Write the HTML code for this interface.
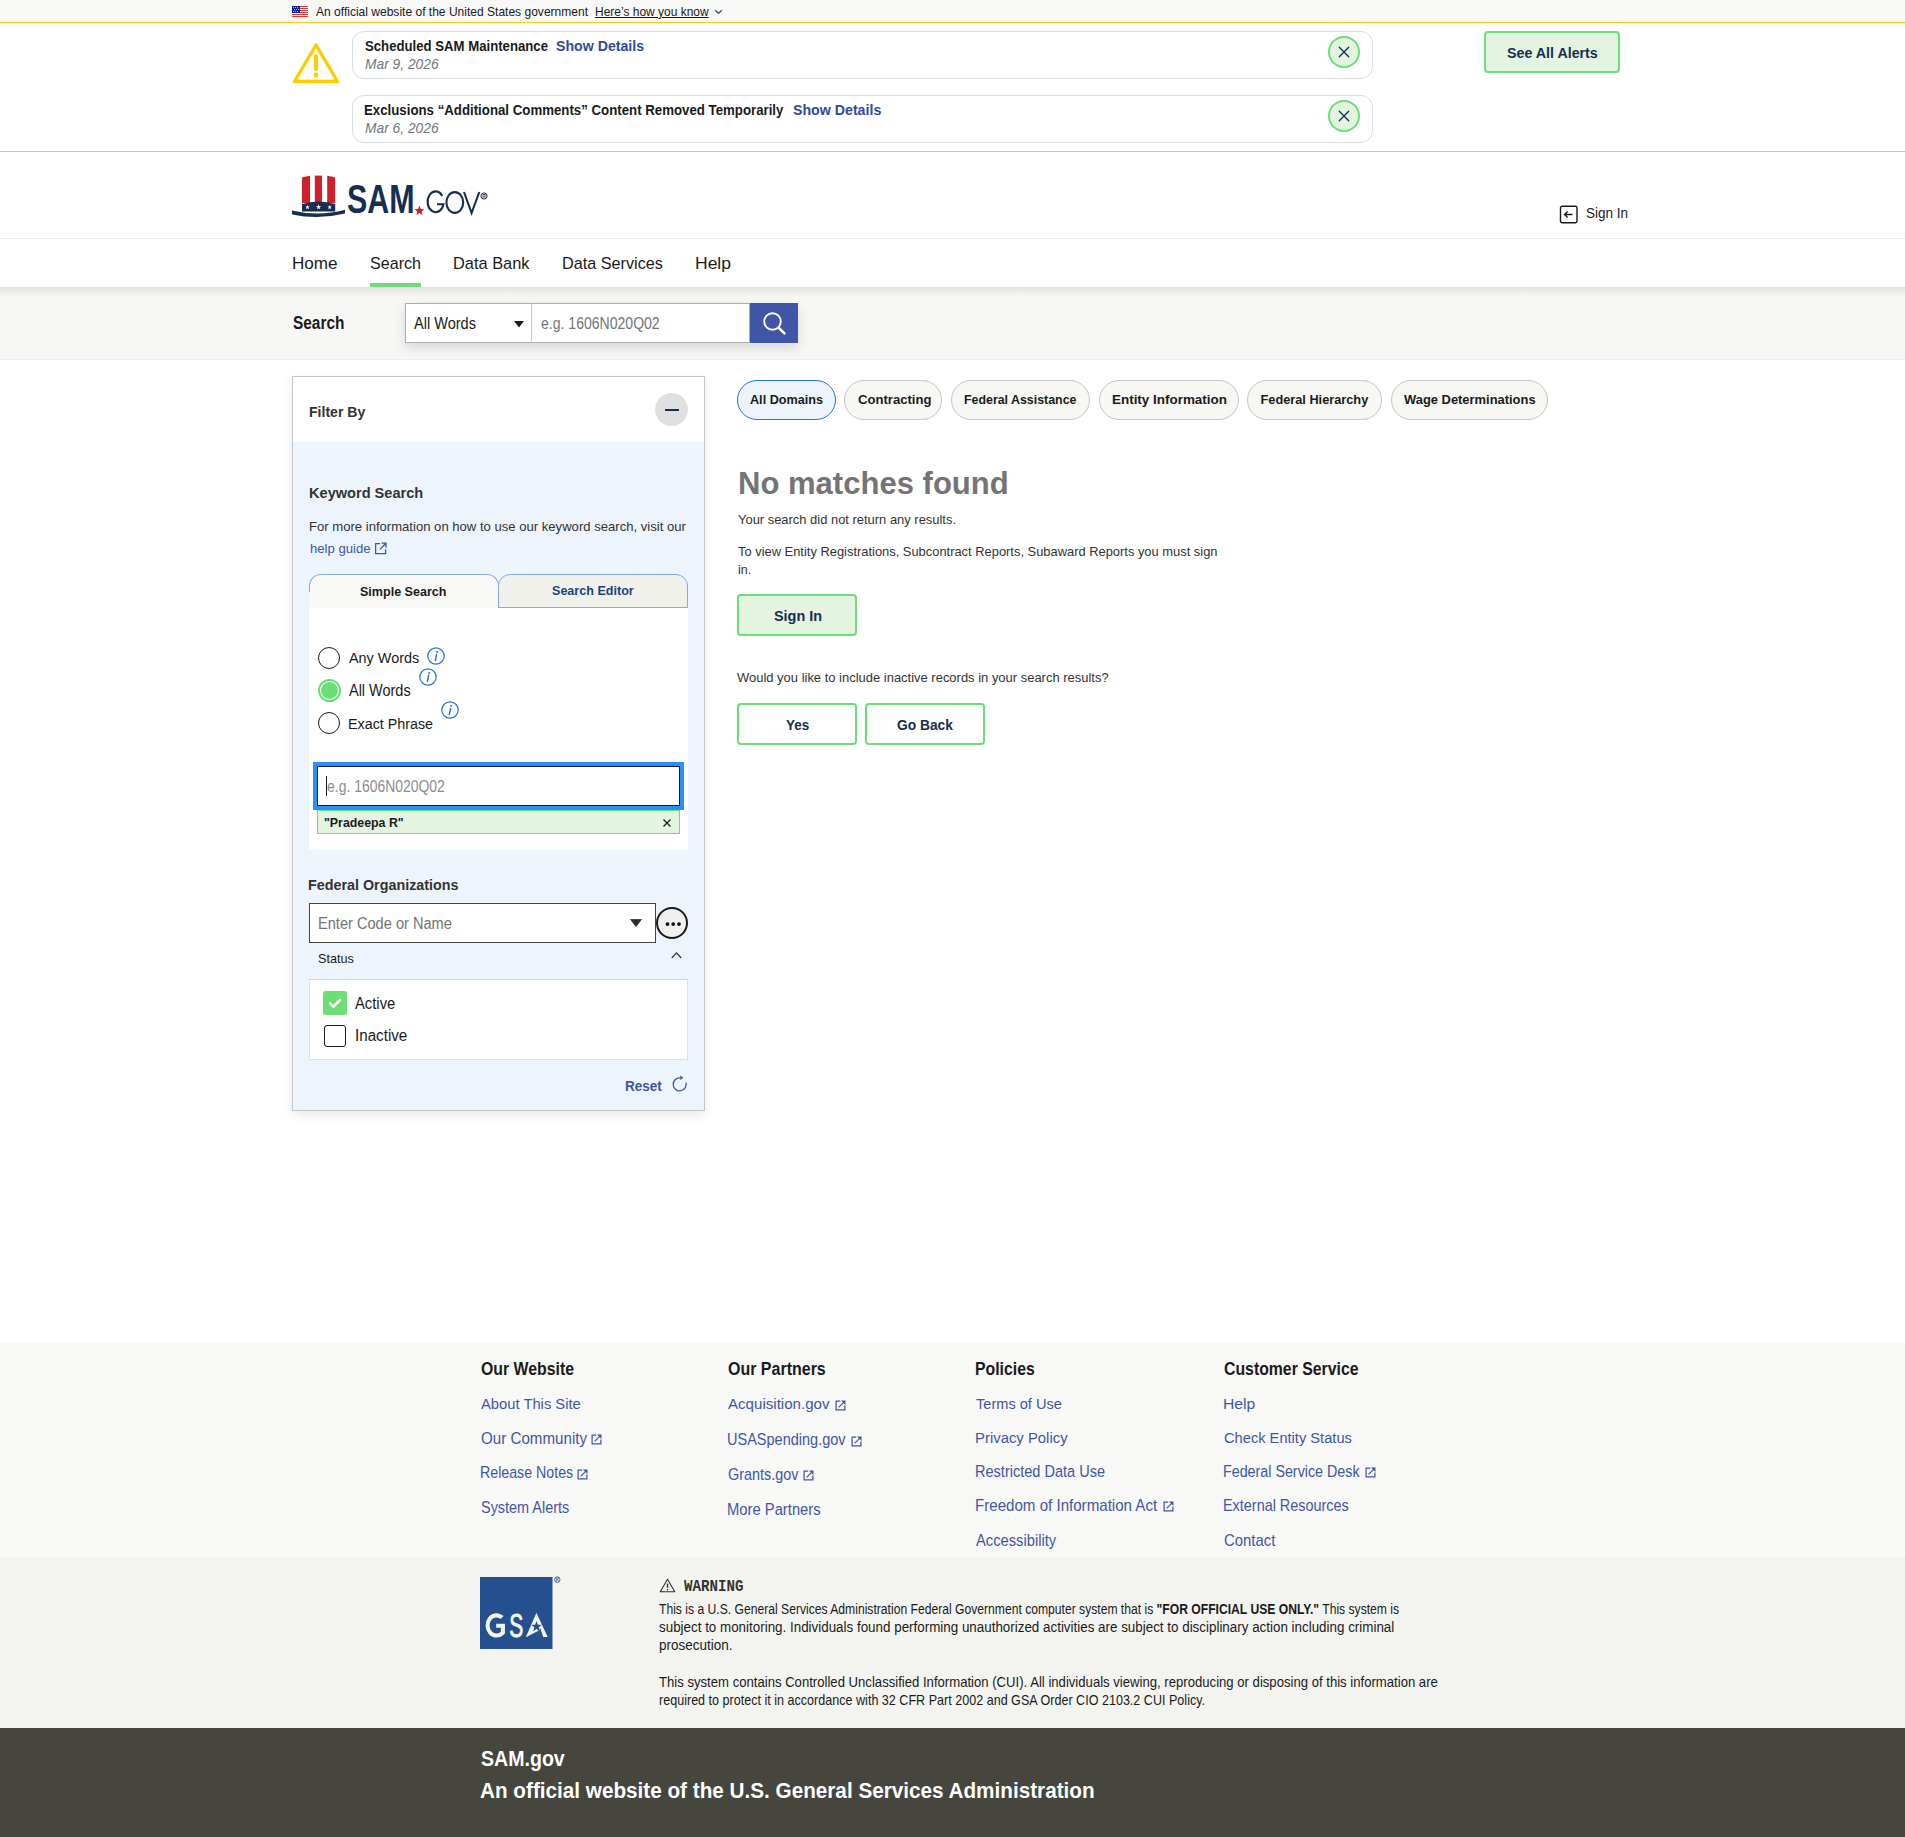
<!DOCTYPE html>
<html><head><meta charset="utf-8">
<style>
*{box-sizing:border-box;margin:0;padding:0}
html,body{width:1905px;height:1837px;overflow:hidden;background:#fff;font-family:"Liberation Sans",sans-serif;color:#1b1b1b}
.a{position:absolute;white-space:nowrap;transform-origin:0 0}
.b{position:absolute}

</style></head><body>
<div class="b" style="left:0;top:0;width:1905px;height:22px;background:#f8f8f6"></div>
<div class="b" style="left:0;top:22px;width:1905px;height:1px;background:#fbd106"></div>
<div class="b" style="left:0;top:151px;width:1905px;height:1px;background:#fbd106"></div>
<svg class="b" style="left:292px;top:6px" width="16" height="11" viewBox="0 0 16 11">
<rect width="16" height="11" fill="#fff"/>
<g fill="#d83933"><rect y="0" width="16" height="1"/><rect y="2" width="16" height="1"/><rect y="4" width="16" height="1"/><rect y="6" width="16" height="1"/><rect y="8" width="16" height="1"/><rect y="10" width="16" height="1"/></g>
<rect width="8" height="7" fill="#0b1ea8"/>
<g fill="#fff"><circle cx="1.6" cy="1.4" r=".5"/><circle cx="3.6" cy="1.4" r=".5"/><circle cx="5.6" cy="1.4" r=".5"/><circle cx="2.6" cy="3.4" r=".5"/><circle cx="4.6" cy="3.4" r=".5"/><circle cx="6.6" cy="3.4" r=".5"/><circle cx="1.6" cy="5.4" r=".5"/><circle cx="3.6" cy="5.4" r=".5"/><circle cx="5.6" cy="5.4" r=".5"/></g>
</svg>
<div class="a" style="left:316.00px;top:4.79px;font-size:13.19px;line-height:13.19px;font-weight:400;font-style:normal;color:#1b1b1b;font-family:'Liberation Sans',sans-serif;transform:scaleX(0.9125);">An official website of the United States government</div>
<div class="a" style="left:595.09px;top:4.79px;font-size:13.19px;line-height:13.19px;font-weight:400;font-style:normal;color:#1b1b1b;font-family:'Liberation Sans',sans-serif;transform:scaleX(0.9081);text-decoration:underline;text-underline-offset:1px">Here’s how you know</div>
<svg class="b" style="left:714px;top:8px" width="9" height="7" viewBox="0 0 9 7"><path d="M1.2 2.2 L4.5 5.3 L7.8 2.2" fill="none" stroke="#3f57a6" stroke-width="1.4"/></svg>
<svg class="b" style="left:292px;top:42px" width="48" height="42" viewBox="0 0 48 42">
<path d="M24 3 L45.5 39.5 L2.5 39.5 Z" fill="none" stroke="#fccd00" stroke-width="3.4" stroke-linejoin="round"/>
<path d="M24 14 L24 27" stroke="#fccd00" stroke-width="4.2" stroke-linecap="round"/>
<circle cx="24" cy="33" r="2.4" fill="#fccd00"/>
</svg>
<div class="b" style="left:352px;top:31px;width:1021px;height:48px;border:1px solid #dcdddf;border-radius:12px;background:#fff"></div>
<div class="b" style="left:1328px;top:36px;width:32px;height:32px;border-radius:50%;border:2px solid #6ddd76;background:#e3f4e1"></div>
<svg class="b" style="left:1338px;top:46px" width="12" height="12" viewBox="0 0 12 12"><path d="M1.3 1.3 L10.7 10.7 M10.7 1.3 L1.3 10.7" stroke="#162e51" stroke-width="1.35" stroke-linecap="round"/></svg>
<div class="b" style="left:352px;top:95px;width:1021px;height:48px;border:1px solid #dcdddf;border-radius:12px;background:#fff"></div>
<div class="b" style="left:1328px;top:100px;width:32px;height:32px;border-radius:50%;border:2px solid #6ddd76;background:#e3f4e1"></div>
<svg class="b" style="left:1338px;top:110px" width="12" height="12" viewBox="0 0 12 12"><path d="M1.3 1.3 L10.7 10.7 M10.7 1.3 L1.3 10.7" stroke="#162e51" stroke-width="1.35" stroke-linecap="round"/></svg>
<div class="a" style="left:365.00px;top:38.61px;font-size:14.93px;line-height:14.93px;font-weight:700;font-style:normal;color:#1b1b1b;font-family:'Liberation Sans',sans-serif;transform:scaleX(0.8826);">Scheduled SAM Maintenance</div>
<div class="a" style="left:556.30px;top:38.61px;font-size:14.93px;line-height:14.93px;font-weight:700;font-style:normal;color:#2f4a9e;font-family:'Liberation Sans',sans-serif;transform:scaleX(0.9483);">Show Details</div>
<div class="a" style="left:365.00px;top:56.17px;font-size:15.22px;line-height:15.22px;font-weight:400;font-style:italic;color:#71767a;font-family:'Liberation Sans',sans-serif;transform:scaleX(0.9060);">Mar 9, 2026</div>
<div class="a" style="left:364.11px;top:102.61px;font-size:14.93px;line-height:14.93px;font-weight:700;font-style:normal;color:#1b1b1b;font-family:'Liberation Sans',sans-serif;transform:scaleX(0.8880);">Exclusions “Additional Comments” Content Removed Temporarily</div>
<div class="a" style="left:792.50px;top:102.61px;font-size:14.93px;line-height:14.93px;font-weight:700;font-style:normal;color:#2f4a9e;font-family:'Liberation Sans',sans-serif;transform:scaleX(0.9505);">Show Details</div>
<div class="a" style="left:365.00px;top:120.17px;font-size:15.22px;line-height:15.22px;font-weight:400;font-style:italic;color:#71767a;font-family:'Liberation Sans',sans-serif;transform:scaleX(0.9060);">Mar 6, 2026</div>
<div class="b" style="left:1484px;top:31px;width:136px;height:42px;border:2px solid #6ddd76;border-radius:4px;background:#e3f4e1"></div>
<div class="a" style="left:1506.80px;top:45.37px;font-size:15.22px;line-height:15.22px;font-weight:700;font-style:normal;color:#162e51;font-family:'Liberation Sans',sans-serif;transform:scaleX(0.9358);">See All Alerts</div>
<svg class="b" style="left:290px;top:174px" width="60" height="44" viewBox="290 174 60 44">
<path d="M302 177.5 Q306 176.3 310 175.8 L310 203 L302 203 Z" fill="#d0202e"/>
<path d="M314.8 175.6 L322 175.6 L322 203 L314.8 203 Z" fill="#d0202e"/>
<path d="M327.2 175.8 Q331.5 176.3 335.2 177.5 L335.2 203 L327.2 203 Z" fill="#d0202e"/>
<path d="M302 204 Q318.6 199 335.2 204 L335.2 211.5 L302 211.5 Z" fill="#162e51"/>
<polygon points="307.50,204.80 308.09,206.38 309.78,206.46 308.46,207.51 308.91,209.14 307.50,208.21 306.09,209.14 306.54,207.51 305.22,206.46 306.91,206.38" fill="#fff"/><polygon points="318.60,204.30 319.27,206.08 321.17,206.17 319.68,207.35 320.19,209.18 318.60,208.13 317.01,209.18 317.52,207.35 316.03,206.17 317.93,206.08" fill="#fff"/><polygon points="329.70,204.80 330.29,206.38 331.98,206.46 330.66,207.51 331.11,209.14 329.70,208.21 328.29,209.14 328.74,207.51 327.42,206.46 329.11,206.38" fill="#fff"/>
<path d="M292 210.5 Q318.5 217 345 209.8 L345 213.5 Q318.5 220 292 214.5 Z" fill="#162e51"/>
</svg>
<div class="a" style="left:347.24px;top:179.30px;font-size:40.00px;line-height:40.00px;font-weight:700;font-style:normal;color:#162e51;font-family:'Liberation Sans',sans-serif;transform:scaleX(0.7596);">SAM</div>
<svg class="b" style="left:414px;top:205px" width="11" height="11" viewBox="0 0 24 24"><path d="M12 1 L14.9 8.6 L23 9 L16.7 14.2 L18.8 22 L12 17.6 L5.2 22 L7.3 14.2 L1 9 L9.1 8.6 Z" fill="#d0202e"/></svg>
<svg class="b" style="left:420px;top:185px" width="70" height="35" viewBox="420 185 70 35"><g fill="none" stroke="#162e51" stroke-width="2.1"><path d="M442.3 196 A8 10.4 0 1 0 443.4 204.2 L437 204.2"/><ellipse cx="454.8" cy="202.5" rx="8.4" ry="10.4"/><path d="M464 192 L471.6 213 L479.3 192"/></g></svg>
<svg class="b" style="left:480px;top:192px" width="8" height="8" viewBox="0 0 8 8"><circle cx="4" cy="4" r="3.1" fill="none" stroke="#162e51" stroke-width="1"/><text x="4" y="5.8" font-size="5" text-anchor="middle" fill="#162e51" font-family="Liberation Sans" font-weight="bold">R</text></svg>
<svg class="b" style="left:1559px;top:205px" width="20" height="19" viewBox="0 0 20 19"><rect x="1.5" y="1.2" width="16.5" height="16.5" rx="1.6" fill="none" stroke="#1b1b1b" stroke-width="1.4"/><path d="M13.5 9.5 L5.5 9.5 M8.6 6.4 L5.5 9.5 L8.6 12.6" fill="none" stroke="#1b1b1b" stroke-width="1.4"/></svg>
<div class="a" style="left:1586.00px;top:205.14px;font-size:15.36px;line-height:15.36px;font-weight:400;font-style:normal;color:#1b1b1b;font-family:'Liberation Sans',sans-serif;transform:scaleX(0.8799);">Sign In</div>
<div class="b" style="left:0;top:238px;width:1905px;height:1px;background:#efefea"></div>
<div class="a" style="left:292.02px;top:254.52px;font-size:17.39px;line-height:17.39px;font-weight:400;font-style:normal;color:#1b1b1b;font-family:'Liberation Sans',sans-serif;transform:scaleX(0.9847);">Home</div>
<div class="a" style="left:370.00px;top:254.52px;font-size:17.39px;line-height:17.39px;font-weight:400;font-style:normal;color:#1b1b1b;font-family:'Liberation Sans',sans-serif;transform:scaleX(0.9267);">Search</div>
<div class="a" style="left:453.06px;top:254.52px;font-size:17.39px;line-height:17.39px;font-weight:400;font-style:normal;color:#1b1b1b;font-family:'Liberation Sans',sans-serif;transform:scaleX(0.9423);">Data Bank</div>
<div class="a" style="left:561.87px;top:254.52px;font-size:17.39px;line-height:17.39px;font-weight:400;font-style:normal;color:#1b1b1b;font-family:'Liberation Sans',sans-serif;transform:scaleX(0.9324);">Data Services</div>
<div class="a" style="left:694.99px;top:254.52px;font-size:17.39px;line-height:17.39px;font-weight:400;font-style:normal;color:#1b1b1b;font-family:'Liberation Sans',sans-serif;transform:scaleX(1.0067);">Help</div>
<div class="b" style="left:370px;top:283px;width:51px;height:4px;background:#6ddd76"></div>
<div class="b" style="left:0;top:287px;width:1905px;height:72px;background:#f7f7f5"></div>
<div class="b" style="left:0;top:287px;width:1905px;height:11px;background:linear-gradient(rgba(0,0,0,.095),rgba(0,0,0,.02) 60%,rgba(0,0,0,0))"></div>
<div class="b" style="left:0;top:359px;width:1905px;height:1px;background:#eeeeea"></div>
<div class="a" style="left:293.00px;top:313.58px;font-size:18.26px;line-height:18.26px;font-weight:700;font-style:normal;color:#1b1b1b;font-family:'Liberation Sans',sans-serif;transform:scaleX(0.8448);">Search</div>
<div class="b" style="left:405px;top:303px;width:393px;height:40px;box-shadow:0 5px 12px rgba(0,0,0,.13)"></div>
<div class="b" style="left:405px;top:303px;width:127px;height:40px;background:#fff;border:1px solid #a9aeb1"></div>
<div class="b" style="left:531px;top:303px;width:219px;height:40px;background:#fff;border:1px solid #a9aeb1;border-left:1px solid #c9c9c9"></div>
<div class="a" style="left:414.00px;top:315.55px;font-size:15.94px;line-height:15.94px;font-weight:400;font-style:normal;color:#1b1b1b;font-family:'Liberation Sans',sans-serif;transform:scaleX(0.9127);">All Words</div>
<svg class="b" style="left:514px;top:321px" width="10" height="7" viewBox="0 0 10 7"><path d="M0 0 L10 0 L5 6.5 Z" fill="#1b1b1b"/></svg>
<div class="a" style="left:540.70px;top:315.55px;font-size:15.94px;line-height:15.94px;font-weight:400;font-style:normal;color:#71767a;font-family:'Liberation Sans',sans-serif;transform:scaleX(0.8811);">e.g. 1606N020Q02</div>
<div class="b" style="left:750px;top:303px;width:48px;height:40px;background:#3f55a7"></div>
<svg class="b" style="left:760px;top:310px" width="28" height="28" viewBox="760 310 28 28"><circle cx="772.5" cy="321.5" r="8.3" fill="none" stroke="#fff" stroke-width="1.9"/><path d="M778.6 327.8 L784.4 333.4" stroke="#fff" stroke-width="2.6" stroke-linecap="round"/></svg>
<div class="b" style="left:292px;top:376px;width:413px;height:735px;border:1px solid #c6c6c6;background:#edf4fb;box-shadow:0 4px 10px rgba(0,0,0,.09)"></div>
<div class="b" style="left:293px;top:377px;width:411px;height:65px;background:#fff"></div>
<div class="a" style="left:308.58px;top:403.67px;font-size:15.22px;line-height:15.22px;font-weight:700;font-style:normal;color:#333;font-family:'Liberation Sans',sans-serif;transform:scaleX(0.9243);">Filter By</div>
<div class="b" style="left:655px;top:393px;width:33px;height:33px;border-radius:50%;background:#e0e0e0"></div>
<div class="b" style="left:665px;top:409px;width:14px;height:1.5px;background:#112e51"></div>
<div class="a" style="left:308.72px;top:485.71px;font-size:14.93px;line-height:14.93px;font-weight:700;font-style:normal;color:#333;font-family:'Liberation Sans',sans-serif;transform:scaleX(0.9766);">Keyword Search</div>
<div class="a" style="left:308.81px;top:520.09px;font-size:13.19px;line-height:13.19px;font-weight:400;font-style:normal;color:#333;font-family:'Liberation Sans',sans-serif;transform:scaleX(0.9925);">For more information on how to use our keyword search, visit our</div>
<div class="a" style="left:309.80px;top:541.74px;font-size:13.60px;line-height:13.60px;font-weight:400;font-style:normal;color:#3f57a6;font-family:'Liberation Sans',sans-serif;transform:scaleX(0.9650);">help guide</div>
<svg class="b" style="left:374px;top:542px" width="14" height="13" viewBox="0 0 14 13"><path d="M6 1.6 L1.6 1.6 L1.6 11.6 L11.6 11.6 L11.6 7.2" fill="none" stroke="#3f57a6" stroke-width="1.3"/><path d="M7.5 1.2 L12 1.2 L12 5.7 M12 1.2 L6 7.2" fill="none" stroke="#3f57a6" stroke-width="1.3"/></svg>
<div class="b" style="left:309px;top:608px;width:379px;height:242px;background:#fff"></div>
<div class="b" style="left:309px;top:574px;width:190px;height:34px;background:#f8f8f6;border:1px solid #80a9f0;border-bottom:none;border-radius:12px 12px 0 0"></div>
<div class="b" style="left:309px;top:592px;width:1.5px;height:16px;background:#f8f8f6"></div>
<div class="b" style="left:498px;top:574px;width:190px;height:34px;background:#f1f1ec;border:1px solid #80a9f0;border-radius:12px 12px 0 0"></div>
<div class="a" style="left:360.00px;top:585.84px;font-size:12.90px;line-height:12.90px;font-weight:700;font-style:normal;color:#1b1b1b;font-family:'Liberation Sans',sans-serif;transform:scaleX(0.9733);">Simple Search</div>
<div class="a" style="left:552.30px;top:585.24px;font-size:12.90px;line-height:12.90px;font-weight:700;font-style:normal;color:#1a4480;font-family:'Liberation Sans',sans-serif;transform:scaleX(0.9749);">Search Editor</div>
<div class="b" style="left:318px;top:647px;width:22px;height:22px;border-radius:50%;border:1.6px solid #1b1b1b;background:#fff"></div>
<div class="b" style="left:317.5px;top:679px;width:23px;height:23px;border-radius:50%;border:2.4px solid #6ddd76;background:#fff"></div>
<div class="b" style="left:320.5px;top:682px;width:17px;height:17px;border-radius:50%;background:#6ddd76"></div>
<div class="b" style="left:318px;top:712px;width:22px;height:22px;border-radius:50%;border:1.6px solid #1b1b1b;background:#fff"></div>
<div class="a" style="left:348.90px;top:650.12px;font-size:15.51px;line-height:15.51px;font-weight:400;font-style:normal;color:#1b1b1b;font-family:'Liberation Sans',sans-serif;transform:scaleX(0.9292);">Any Words</div>
<div class="a" style="left:348.90px;top:682.80px;font-size:15.65px;line-height:15.65px;font-weight:400;font-style:normal;color:#1b1b1b;font-family:'Liberation Sans',sans-serif;transform:scaleX(0.9250);">All Words</div>
<div class="a" style="left:348.37px;top:716.24px;font-size:15.36px;line-height:15.36px;font-weight:400;font-style:normal;color:#1b1b1b;font-family:'Liberation Sans',sans-serif;transform:scaleX(0.9309);">Exact Phrase</div>
<svg class="b" style="left:427px;top:647px" width="18" height="18" viewBox="0 0 18 18"><circle cx="9" cy="9" r="8.2" fill="none" stroke="#2672de" stroke-width="1.2"/><path d="M9.6 7.6 L8.3 13.6" stroke="#2672de" stroke-width="1.5" stroke-linecap="round"/><circle cx="10.1" cy="4.9" r="1" fill="#2672de"/></svg>
<svg class="b" style="left:419px;top:668px" width="18" height="18" viewBox="0 0 18 18"><circle cx="9" cy="9" r="8.2" fill="none" stroke="#2672de" stroke-width="1.2"/><path d="M9.6 7.6 L8.3 13.6" stroke="#2672de" stroke-width="1.5" stroke-linecap="round"/><circle cx="10.1" cy="4.9" r="1" fill="#2672de"/></svg>
<svg class="b" style="left:441px;top:701px" width="18" height="18" viewBox="0 0 18 18"><circle cx="9" cy="9" r="8.2" fill="none" stroke="#2672de" stroke-width="1.2"/><path d="M9.6 7.6 L8.3 13.6" stroke="#2672de" stroke-width="1.5" stroke-linecap="round"/><circle cx="10.1" cy="4.9" r="1" fill="#2672de"/></svg>
<div class="b" style="left:313px;top:762px;width:371px;height:48px;background:#2491ff"></div>
<div class="b" style="left:317px;top:766px;width:363px;height:40px;background:#fff;border:1px solid #1b1b1b"></div>
<div class="b" style="left:326px;top:776px;width:1.2px;height:20px;background:#1b1b1b"></div>
<div class="a" style="left:327.00px;top:778.65px;font-size:15.94px;line-height:15.94px;font-weight:400;font-style:normal;color:#8d8d8d;font-family:'Liberation Sans',sans-serif;transform:scaleX(0.8752);">e.g. 1606N020Q02</div>
<div class="b" style="left:317px;top:810px;width:363px;height:24px;background:#e3f4e1;border:1px solid #6ddd76"></div>
<div class="a" style="left:323.80px;top:816.11px;font-size:13.04px;line-height:13.04px;font-weight:700;font-style:normal;color:#1b1b1b;font-family:'Liberation Sans',sans-serif;transform:scaleX(0.9478);">&quot;Pradeepa R&quot;</div>
<svg class="b" style="left:662px;top:818px" width="10" height="10" viewBox="0 0 10 10"><path d="M1.5 1.5 L8.5 8.5 M8.5 1.5 L1.5 8.5" stroke="#1b1b1b" stroke-width="1.3"/></svg>
<div class="a" style="left:308.46px;top:877.47px;font-size:15.22px;line-height:15.22px;font-weight:700;font-style:normal;color:#333;font-family:'Liberation Sans',sans-serif;transform:scaleX(0.9418);">Federal Organizations</div>
<div class="b" style="left:309px;top:903px;width:347px;height:40px;background:#fff;border:1px solid #46463f"></div>
<div class="a" style="left:317.88px;top:915.77px;font-size:15.80px;line-height:15.80px;font-weight:400;font-style:normal;color:#757575;font-family:'Liberation Sans',sans-serif;transform:scaleX(0.9239);">Enter Code or Name</div>
<svg class="b" style="left:630px;top:919px" width="12" height="8" viewBox="0 0 12 8"><path d="M0.6 0.4 L11.4 0.4 L6 7.6 Z" fill="#2b2b28" stroke="#2b2b28" stroke-width=".8" stroke-linejoin="round"/></svg>
<div class="b" style="left:656px;top:907px;width:32px;height:32px;border-radius:50%;border:2px solid #1b1b1b;background:#f0f0f0"></div>
<svg class="b" style="left:664px;top:921px" width="18" height="6" viewBox="0 0 18 6"><circle cx="3.5" cy="3.1" r="1.9" fill="#111"/><circle cx="9.2" cy="3.1" r="1.9" fill="#111"/><circle cx="15" cy="3.1" r="1.9" fill="#111"/></svg>
<div class="a" style="left:317.70px;top:953.26px;font-size:12.75px;line-height:12.75px;font-weight:400;font-style:normal;color:#1b1b1b;font-family:'Liberation Sans',sans-serif;transform:scaleX(0.9924);">Status</div>
<svg class="b" style="left:670px;top:950px" width="13" height="10" viewBox="0 0 13 10"><path d="M1.8 8 L6.5 2.8 L11.2 8" fill="none" stroke="#333" stroke-width="1.2"/></svg>
<div class="b" style="left:309px;top:979px;width:379px;height:81px;background:#fff;border:1px solid #dfe1e2;border-top-color:#d6d7d9"></div>
<div class="b" style="left:323px;top:991px;width:24px;height:24px;border-radius:3px;background:#6ddd76"></div>
<svg class="b" style="left:323px;top:991px" width="24" height="24" viewBox="0 0 24 24"><path d="M7 12.3 L10.5 15.6 L17 9" fill="none" stroke="#fff" stroke-width="2.6" stroke-linecap="round" stroke-linejoin="round"/></svg>
<div class="a" style="left:354.80px;top:995.77px;font-size:15.80px;line-height:15.80px;font-weight:400;font-style:normal;color:#1b1b1b;font-family:'Liberation Sans',sans-serif;transform:scaleX(0.9352);">Active</div>
<div class="b" style="left:324px;top:1025px;width:22px;height:22px;border-radius:3px;border:1.5px solid #1b1b1b;background:#fff"></div>
<div class="a" style="left:354.94px;top:1027.87px;font-size:15.80px;line-height:15.80px;font-weight:400;font-style:normal;color:#1b1b1b;font-family:'Liberation Sans',sans-serif;transform:scaleX(0.9606);">Inactive</div>
<div class="a" style="left:625.40px;top:1079.26px;font-size:14.64px;line-height:14.64px;font-weight:700;font-style:normal;color:#3f57a6;font-family:'Liberation Sans',sans-serif;transform:scaleX(0.9259);">Reset</div>
<svg class="b" style="left:671px;top:1075px" width="17" height="17" viewBox="0 0 17 17"><path d="M15 7.6 A6.5 6.5 0 1 1 8.9 2.8" fill="none" stroke="#3f57a6" stroke-width="1.3"/><path d="M9.2 0.6 L12.4 2.8 L9.2 5 Z" fill="#3f57a6"/></svg>
<div class="b" style="left:737px;top:380px;width:99.0px;height:40px;border-radius:20px;border:1.5px solid #2672de;background:#edf4fb"></div>
<div class="a" style="left:750.00px;top:394.26px;font-size:12.75px;line-height:12.75px;font-weight:700;font-style:normal;color:#1b1b1b;font-family:'Liberation Sans',sans-serif;transform:scaleX(0.9906);">All Domains</div>
<div class="b" style="left:844px;top:380px;width:98.3px;height:40px;border-radius:20px;border:1px solid #c6c6c6;background:#f7f7f4"></div>
<div class="a" style="left:857.50px;top:394.26px;font-size:12.75px;line-height:12.75px;font-weight:700;font-style:normal;color:#1b1b1b;font-family:'Liberation Sans',sans-serif;transform:scaleX(1.0276);">Contracting</div>
<div class="b" style="left:951.2px;top:380px;width:139.2px;height:40px;border-radius:20px;border:1px solid #c6c6c6;background:#f7f7f4"></div>
<div class="a" style="left:964.40px;top:394.26px;font-size:12.75px;line-height:12.75px;font-weight:700;font-style:normal;color:#1b1b1b;font-family:'Liberation Sans',sans-serif;transform:scaleX(0.9713);">Federal Assistance</div>
<div class="b" style="left:1099.3px;top:380px;width:139.3px;height:40px;border-radius:20px;border:1px solid #c6c6c6;background:#f7f7f4"></div>
<div class="a" style="left:1111.90px;top:394.26px;font-size:12.75px;line-height:12.75px;font-weight:700;font-style:normal;color:#1b1b1b;font-family:'Liberation Sans',sans-serif;transform:scaleX(1.0536);">Entity Information</div>
<div class="b" style="left:1246.9px;top:380px;width:135.3px;height:40px;border-radius:20px;border:1px solid #c6c6c6;background:#f7f7f4"></div>
<div class="a" style="left:1260.50px;top:394.26px;font-size:12.75px;line-height:12.75px;font-weight:700;font-style:normal;color:#1b1b1b;font-family:'Liberation Sans',sans-serif;">Federal Hierarchy</div>
<div class="b" style="left:1391px;top:380px;width:157.4px;height:40px;border-radius:20px;border:1px solid #c6c6c6;background:#f7f7f4"></div>
<div class="a" style="left:1403.60px;top:394.26px;font-size:12.75px;line-height:12.75px;font-weight:700;font-style:normal;color:#1b1b1b;font-family:'Liberation Sans',sans-serif;transform:scaleX(1.0131);">Wage Determinations</div>
<div class="a" style="left:737.73px;top:468.34px;font-size:31.59px;line-height:31.59px;font-weight:700;font-style:normal;color:#747474;font-family:'Liberation Sans',sans-serif;transform:scaleX(0.9829);">No matches found</div>
<div class="a" style="left:737.50px;top:513.11px;font-size:13.04px;line-height:13.04px;font-weight:400;font-style:normal;color:#333;font-family:'Liberation Sans',sans-serif;transform:scaleX(0.9922);">Your search did not return any results.</div>
<div class="a" style="left:737.50px;top:545.07px;font-size:13.33px;line-height:13.33px;font-weight:400;font-style:normal;color:#333;font-family:'Liberation Sans',sans-serif;transform:scaleX(0.9675);">To view Entity Registrations, Subcontract Reports, Subaward Reports you must sign</div>
<div class="a" style="left:737.80px;top:563.18px;font-size:13.20px;line-height:13.20px;font-weight:400;font-style:normal;color:#333;font-family:'Liberation Sans',sans-serif;transform:scaleX(0.9424);">in.</div>
<div class="b" style="left:737px;top:594px;width:120px;height:42px;border:2px solid #6ddd76;border-radius:4px;background:#e3f4e1"></div>
<div class="a" style="left:773.80px;top:608.98px;font-size:14.49px;line-height:14.49px;font-weight:700;font-style:normal;color:#162e51;font-family:'Liberation Sans',sans-serif;transform:scaleX(0.9952);">Sign In</div>
<div class="a" style="left:737.30px;top:671.21px;font-size:13.04px;line-height:13.04px;font-weight:400;font-style:normal;color:#333;font-family:'Liberation Sans',sans-serif;transform:scaleX(0.9950);">Would you like to include inactive records in your search results?</div>
<div class="b" style="left:737px;top:703px;width:120px;height:42px;border:2px solid #6ddd76;border-radius:4px;background:#fff"></div>
<div class="a" style="left:785.80px;top:718.00px;font-size:14.35px;line-height:14.35px;font-weight:700;font-style:normal;color:#162e51;font-family:'Liberation Sans',sans-serif;transform:scaleX(0.9380);">Yes</div>
<div class="b" style="left:865px;top:703px;width:120px;height:42px;border:2px solid #6ddd76;border-radius:4px;background:#fff"></div>
<div class="a" style="left:897.40px;top:718.00px;font-size:14.35px;line-height:14.35px;font-weight:700;font-style:normal;color:#162e51;font-family:'Liberation Sans',sans-serif;transform:scaleX(0.9611);">Go Back</div>
<div class="b" style="left:0;top:1343px;width:1905px;height:214px;background:#f8f8f6"></div>
<div class="b" style="left:0;top:1557px;width:1905px;height:171px;background:#f3f4ef"></div>
<div class="b" style="left:0;top:1728px;width:1905px;height:109px;background:#46463f"></div>
<div class="a" style="left:480.50px;top:1360.79px;font-size:17.54px;line-height:17.54px;font-weight:700;font-style:normal;color:#1b1b1b;font-family:'Liberation Sans',sans-serif;transform:scaleX(0.9030);">Our Website</div>
<div class="a" style="left:728.20px;top:1360.79px;font-size:17.54px;line-height:17.54px;font-weight:700;font-style:normal;color:#1b1b1b;font-family:'Liberation Sans',sans-serif;transform:scaleX(0.9121);">Our Partners</div>
<div class="a" style="left:975.30px;top:1360.79px;font-size:17.54px;line-height:17.54px;font-weight:700;font-style:normal;color:#1b1b1b;font-family:'Liberation Sans',sans-serif;transform:scaleX(0.9028);">Policies</div>
<div class="a" style="left:1224.30px;top:1360.79px;font-size:17.54px;line-height:17.54px;font-weight:700;font-style:normal;color:#1b1b1b;font-family:'Liberation Sans',sans-serif;transform:scaleX(0.9021);">Customer Service</div>
<div class="a" style="left:480.50px;top:1396.07px;font-size:15.22px;line-height:15.22px;font-weight:400;font-style:normal;color:#3f57a6;font-family:'Liberation Sans',sans-serif;transform:scaleX(0.9694);">About This Site</div>
<div class="a" style="left:480.50px;top:1430.03px;font-size:16.09px;line-height:16.09px;font-weight:400;font-style:normal;color:#3f57a6;font-family:'Liberation Sans',sans-serif;transform:scaleX(0.9420);">Our Community</div>
<svg class="b" style="left:590.6px;top:1434.2px" width="11" height="11" viewBox="0 0 11 11"><path d="M5.2 1.1 L1.1 1.1 L1.1 9.9 L9.9 9.9 L9.9 5.6" fill="none" stroke="#3f57a6" stroke-width="1.25"/><path d="M3.6 7.4 L9.2 1.8" stroke="#3f57a6" stroke-width="1.2"/><path d="M6 0.5 L10.5 0.5 L10.5 5 Z" fill="#3f57a6"/></svg>
<div class="a" style="left:479.59px;top:1465.30px;font-size:15.65px;line-height:15.65px;font-weight:400;font-style:normal;color:#3f57a6;font-family:'Liberation Sans',sans-serif;transform:scaleX(0.9079);">Release Notes</div>
<svg class="b" style="left:577.4px;top:1469.1px" width="11" height="11" viewBox="0 0 11 11"><path d="M5.2 1.1 L1.1 1.1 L1.1 9.9 L9.9 9.9 L9.9 5.6" fill="none" stroke="#3f57a6" stroke-width="1.25"/><path d="M3.6 7.4 L9.2 1.8" stroke="#3f57a6" stroke-width="1.2"/><path d="M6 0.5 L10.5 0.5 L10.5 5 Z" fill="#3f57a6"/></svg>
<div class="a" style="left:480.50px;top:1500.20px;font-size:15.65px;line-height:15.65px;font-weight:400;font-style:normal;color:#3f57a6;font-family:'Liberation Sans',sans-serif;transform:scaleX(0.9229);">System Alerts</div>
<div class="a" style="left:728.20px;top:1396.07px;font-size:15.22px;line-height:15.22px;font-weight:400;font-style:normal;color:#3f57a6;font-family:'Liberation Sans',sans-serif;transform:scaleX(0.9917);">Acquisition.gov</div>
<svg class="b" style="left:834.6px;top:1399.5px" width="11" height="11" viewBox="0 0 11 11"><path d="M5.2 1.1 L1.1 1.1 L1.1 9.9 L9.9 9.9 L9.9 5.6" fill="none" stroke="#3f57a6" stroke-width="1.25"/><path d="M3.6 7.4 L9.2 1.8" stroke="#3f57a6" stroke-width="1.2"/><path d="M6 0.5 L10.5 0.5 L10.5 5 Z" fill="#3f57a6"/></svg>
<div class="a" style="left:727.31px;top:1431.08px;font-size:16.38px;line-height:16.38px;font-weight:400;font-style:normal;color:#3f57a6;font-family:'Liberation Sans',sans-serif;transform:scaleX(0.8868);">USASpending.gov</div>
<svg class="b" style="left:851.2px;top:1435.5px" width="11" height="11" viewBox="0 0 11 11"><path d="M5.2 1.1 L1.1 1.1 L1.1 9.9 L9.9 9.9 L9.9 5.6" fill="none" stroke="#3f57a6" stroke-width="1.25"/><path d="M3.6 7.4 L9.2 1.8" stroke="#3f57a6" stroke-width="1.2"/><path d="M6 0.5 L10.5 0.5 L10.5 5 Z" fill="#3f57a6"/></svg>
<div class="a" style="left:728.20px;top:1465.98px;font-size:16.38px;line-height:16.38px;font-weight:400;font-style:normal;color:#3f57a6;font-family:'Liberation Sans',sans-serif;transform:scaleX(0.8808);">Grants.gov</div>
<svg class="b" style="left:803.4px;top:1470.4px" width="11" height="11" viewBox="0 0 11 11"><path d="M5.2 1.1 L1.1 1.1 L1.1 9.9 L9.9 9.9 L9.9 5.6" fill="none" stroke="#3f57a6" stroke-width="1.25"/><path d="M3.6 7.4 L9.2 1.8" stroke="#3f57a6" stroke-width="1.2"/><path d="M6 0.5 L10.5 0.5 L10.5 5 Z" fill="#3f57a6"/></svg>
<div class="a" style="left:727.28px;top:1500.93px;font-size:16.09px;line-height:16.09px;font-weight:400;font-style:normal;color:#3f57a6;font-family:'Liberation Sans',sans-serif;transform:scaleX(0.9194);">More Partners</div>
<div class="a" style="left:976.20px;top:1396.07px;font-size:15.22px;line-height:15.22px;font-weight:400;font-style:normal;color:#3f57a6;font-family:'Liberation Sans',sans-serif;transform:scaleX(0.9574);">Terms of Use</div>
<div class="a" style="left:975.24px;top:1430.12px;font-size:15.51px;line-height:15.51px;font-weight:400;font-style:normal;color:#3f57a6;font-family:'Liberation Sans',sans-serif;transform:scaleX(0.9601);">Privacy Policy</div>
<div class="a" style="left:975.30px;top:1462.83px;font-size:16.09px;line-height:16.09px;font-weight:400;font-style:normal;color:#3f57a6;font-family:'Liberation Sans',sans-serif;transform:scaleX(0.9040);">Restricted Data Use</div>
<div class="a" style="left:975.28px;top:1496.98px;font-size:16.38px;line-height:16.38px;font-weight:400;font-style:normal;color:#3f57a6;font-family:'Liberation Sans',sans-serif;transform:scaleX(0.9233);">Freedom of Information Act</div>
<svg class="b" style="left:1163.2px;top:1501.4px" width="11" height="11" viewBox="0 0 11 11"><path d="M5.2 1.1 L1.1 1.1 L1.1 9.9 L9.9 9.9 L9.9 5.6" fill="none" stroke="#3f57a6" stroke-width="1.25"/><path d="M3.6 7.4 L9.2 1.8" stroke="#3f57a6" stroke-width="1.2"/><path d="M6 0.5 L10.5 0.5 L10.5 5 Z" fill="#3f57a6"/></svg>
<div class="a" style="left:976.20px;top:1531.58px;font-size:16.38px;line-height:16.38px;font-weight:400;font-style:normal;color:#3f57a6;font-family:'Liberation Sans',sans-serif;transform:scaleX(0.8998);">Accessibility</div>
<div class="a" style="left:1223.27px;top:1396.07px;font-size:15.22px;line-height:15.22px;font-weight:400;font-style:normal;color:#3f57a6;font-family:'Liberation Sans',sans-serif;transform:scaleX(1.0298);">Help</div>
<div class="a" style="left:1224.30px;top:1430.12px;font-size:15.51px;line-height:15.51px;font-weight:400;font-style:normal;color:#3f57a6;font-family:'Liberation Sans',sans-serif;transform:scaleX(0.9454);">Check Entity Status</div>
<div class="a" style="left:1223.41px;top:1462.83px;font-size:16.09px;line-height:16.09px;font-weight:400;font-style:normal;color:#3f57a6;font-family:'Liberation Sans',sans-serif;transform:scaleX(0.8884);">Federal Service Desk</div>
<svg class="b" style="left:1365.3px;top:1467.0px" width="11" height="11" viewBox="0 0 11 11"><path d="M5.2 1.1 L1.1 1.1 L1.1 9.9 L9.9 9.9 L9.9 5.6" fill="none" stroke="#3f57a6" stroke-width="1.25"/><path d="M3.6 7.4 L9.2 1.8" stroke="#3f57a6" stroke-width="1.2"/><path d="M6 0.5 L10.5 0.5 L10.5 5 Z" fill="#3f57a6"/></svg>
<div class="a" style="left:1223.42px;top:1497.48px;font-size:16.38px;line-height:16.38px;font-weight:400;font-style:normal;color:#3f57a6;font-family:'Liberation Sans',sans-serif;transform:scaleX(0.8808);">External Resources</div>
<div class="a" style="left:1224.30px;top:1531.58px;font-size:16.38px;line-height:16.38px;font-weight:400;font-style:normal;color:#3f57a6;font-family:'Liberation Sans',sans-serif;transform:scaleX(0.9097);">Contact</div>
<svg class="b" style="left:480px;top:1573px" width="84" height="77" viewBox="0 -4 84 77"><rect x="0" y="0" width="72.5" height="72" fill="#24508f"/>
<g fill="none" stroke="#f4f4ef" stroke-width="4.1"><path d="M22.2 40.6 A9 10.1 0 1 0 22.9 55.6 L22.9 48.7 L16.2 48.7"/></g>
<text x="29.2" y="59.9" font-family="Liberation Sans" font-size="34" fill="#f4f4ef" stroke="#f4f4ef" stroke-width="0.9" textLength="14" lengthAdjust="spacingAndGlyphs">S</text>
<polygon points="45.9,59.95 56.4,35.8 67.7,59.95" fill="#f4f4ef"/>
<polygon points="56.50,44.00 57.85,47.74 61.83,47.87 58.69,50.31 59.79,54.13 56.50,51.90 53.21,54.13 54.31,50.31 51.17,47.87 55.15,47.74" fill="#24508f"/>
<polygon points="45.5,60.5 58.4,53.7 60.3,51.6 63.4,60.5" fill="#24508f"/>
<circle cx="77.3" cy="2.6" r="2.7" fill="none" stroke="#24508f" stroke-width=".9"/><path d="M76.4 4.3 L76.4 1 L77.7 1 Q78.6 1.1 78.5 1.9 Q78.4 2.6 77.5 2.6 L76.4 2.6 M77.5 2.6 L78.6 4.3" fill="none" stroke="#24508f" stroke-width=".6"/></svg>
<svg class="b" style="left:659px;top:1578px" width="17" height="15" viewBox="0 0 17 15"><path d="M8.5 1.2 L15.8 13.8 L1.2 13.8 Z" fill="none" stroke="#333" stroke-width="1.1" stroke-linejoin="round"/><path d="M8.5 5.5 L8.5 9.8" stroke="#333" stroke-width="1.4"/><circle cx="8.5" cy="11.8" r=".8" fill="#333"/></svg>
<div class="a" style="left:683.60px;top:1577.66px;font-size:17.10px;line-height:17.10px;font-weight:700;font-style:normal;color:#333;font-family:'Liberation Mono',monospace;transform:scaleX(0.8274);">WARNING</div>
<div class="a" style="left:659.40px;top:1602.30px;font-size:14.35px;line-height:14.35px;font-weight:400;font-style:normal;color:#1b1b1b;font-family:'Liberation Sans',sans-serif;transform:scaleX(0.8458);">This is a U.S. General Services Administration Federal Government computer system that is <b>"FOR OFFICIAL USE ONLY."</b> This system is</div>
<div class="a" style="left:659.40px;top:1620.30px;font-size:14.35px;line-height:14.35px;font-weight:400;font-style:normal;color:#1b1b1b;font-family:'Liberation Sans',sans-serif;transform:scaleX(0.9334);">subject to monitoring. Individuals found performing unauthorized activities are subject to disciplinary action including criminal</div>
<div class="a" style="left:659.40px;top:1638.20px;font-size:14.35px;line-height:14.35px;font-weight:400;font-style:normal;color:#1b1b1b;font-family:'Liberation Sans',sans-serif;transform:scaleX(0.9393);">prosecution.</div>
<div class="a" style="left:659.40px;top:1674.83px;font-size:14.20px;line-height:14.20px;font-weight:400;font-style:normal;color:#1b1b1b;font-family:'Liberation Sans',sans-serif;transform:scaleX(0.9248);">This system contains Controlled Unclassified Information (CUI). All individuals viewing, reproducing or disposing of this information are</div>
<div class="a" style="left:659.40px;top:1692.83px;font-size:14.20px;line-height:14.20px;font-weight:400;font-style:normal;color:#1b1b1b;font-family:'Liberation Sans',sans-serif;transform:scaleX(0.8859);">required to protect it in accordance with 32 CFR Part 2002 and GSA Order CIO 2103.2 CUI Policy.</div>
<div class="a" style="left:480.50px;top:1748.18px;font-size:22.03px;line-height:22.03px;font-weight:700;font-style:normal;color:#fff;font-family:'Liberation Sans',sans-serif;transform:scaleX(0.8890);">SAM.gov</div>
<div class="a" style="left:480.10px;top:1778.66px;font-size:22.75px;line-height:22.75px;font-weight:700;font-style:normal;color:#fff;font-family:'Liberation Sans',sans-serif;transform:scaleX(0.9098);">An official website of the U.S. General Services Administration</div>
</body></html>
